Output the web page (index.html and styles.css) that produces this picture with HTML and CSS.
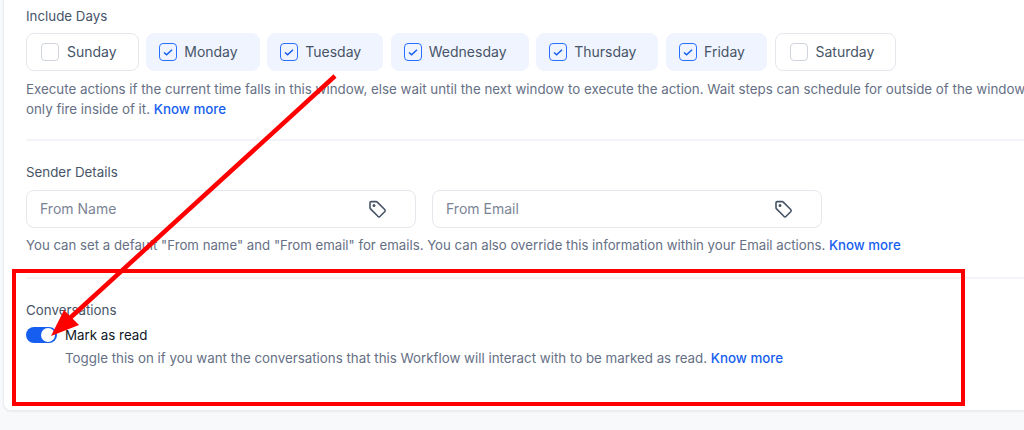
FILE: index.html
```html
<!DOCTYPE html>
<html lang="en">
<head>
<meta charset="utf-8">
<title>Workflow settings</title>
<link rel="stylesheet" href="styles.css">
</head>
<body>
<main class="card">
  <section class="section section-days">
    <div class="label">Include Days</div>
    <div class="days">
      <div class="day"><span class="box"></span>Sunday</div>
      <div class="day on"><span class="box"><svg viewBox="0 0 16 16"><path d="M4 8.5l2.6 2.3L12 5.8"/></svg></span>Monday</div>
      <div class="day on"><span class="box"><svg viewBox="0 0 16 16"><path d="M4 8.5l2.6 2.3L12 5.8"/></svg></span>Tuesday</div>
      <div class="day on"><span class="box"><svg viewBox="0 0 16 16"><path d="M4 8.5l2.6 2.3L12 5.8"/></svg></span>Wednesday</div>
      <div class="day on"><span class="box"><svg viewBox="0 0 16 16"><path d="M4 8.5l2.6 2.3L12 5.8"/></svg></span>Thursday</div>
      <div class="day on"><span class="box"><svg viewBox="0 0 16 16"><path d="M4 8.5l2.6 2.3L12 5.8"/></svg></span>Friday</div>
      <div class="day"><span class="box"></span>Saturday</div>
    </div>
    <p class="help help-wide">Execute actions if the current time falls in this window, else wait until the next window to execute the action. Wait steps can schedule for outside of the window,<br>only fire inside of it. <a href="#">Know more</a></p>
  </section>
  <section class="section section-sender">
    <div class="label">Sender Details</div>
    <div class="inputs">
      <div class="input"><span>From Name</span><svg class="tag" viewBox="0 0 20 20"><path d="M3.2 2.6h5a1.6 1.6 0 0 1 1.1.5l7.4 7.4a1.6 1.6 0 0 1 0 2.2l-4.6 4.6a1.6 1.6 0 0 1-2.2 0L2.5 9.9A1.6 1.6 0 0 1 2 8.8V3.8a1.2 1.2 0 0 1 1.2-1.2z"/><circle cx="6" cy="6.6" r=".7"/></svg></div>
      <div class="input"><span>From Email</span><svg class="tag" viewBox="0 0 20 20"><path d="M3.2 2.6h5a1.6 1.6 0 0 1 1.1.5l7.4 7.4a1.6 1.6 0 0 1 0 2.2l-4.6 4.6a1.6 1.6 0 0 1-2.2 0L2.5 9.9A1.6 1.6 0 0 1 2 8.8V3.8a1.2 1.2 0 0 1 1.2-1.2z"/><circle cx="6" cy="6.6" r=".7"/></svg></div>
    </div>
    <p class="help help-sender">You can set a default "From name" and "From email" for emails. You can also override this information within your Email actions. <a href="#">Know more</a></p>
  </section>
  <section class="section section-conv">
    <div class="label">Conversations</div>
    <div class="toggle-row">
      <span class="toggle"><span class="knob"></span></span>
      <span class="toggle-label">Mark as read</span>
    </div>
    <p class="help help-toggle">Toggle this on if you want the conversations that this Workflow will interact with to be marked as read. <a href="#">Know more</a></p>
  </section>
</main>
<svg class="annotation" viewBox="0 0 1024 430" aria-hidden="true">
  <rect x="14" y="271" width="949" height="133"/>
  <path class="shaft" d="M335 76L70 318"/>
  <path class="head" d="M51 336L64 310L79 325Z"/>
</svg>
</body>
</html>
```

FILE: styles.css
```css
* { box-sizing: border-box; }
html, body { margin: 0; height: 430px; overflow: hidden; }
body {
  position: relative;
  background: #f8f9fb;
  font-family: Inter, "Liberation Sans", sans-serif;
  font-size: 14px;
  line-height: 20px;
  color: #667085;
}
.card {
  width: 1100px;
  height: 411px;
  margin-left: 3px;
  background: #fff;
  border: 1px solid #eaecf0;
  border-top: 0;
  border-radius: 0 0 8px 8px;
  padding: 0 0 0 22px;
  box-shadow: 0 1px 2px rgba(16, 24, 40, .05);
}
.section { border-bottom: 2px solid #f2f4f7; }
.section-days { height: 141px; padding-top: 6px; }
.section-sender { height: 138px; padding-top: 21px; }
.section-conv { border-bottom: 0; padding-top: 21px; }
.label { font-size: 13.33px; line-height: 20px; color: #475467; font-weight: 400; }
.days { display: flex; gap: 7.6px; margin-top: 7px; }
.day {
  display: flex;
  align-items: center;
  gap: 8px;
  height: 38px;
  padding: 0 21px 0 14px;
  border: 1px solid #e4e7ec;
  border-radius: 8px;
  color: #475467;
  background: #fff;
  white-space: nowrap;
}
.day.on { gap: 7px; padding: 0 21px 0 12px; background: #eff4ff; border-color: #eff4ff; }
.box {
  width: 18px;
  height: 18px;
  flex: none;
  border: 1px solid #d0d5dd;
  border-radius: 4px;
  background: #fff;
}
.on .box { border-color: #2970ff; background: #eff4ff; }
.box svg { display: block; width: 16px; height: 16px; fill: none; stroke: #155eef; stroke-width: 1.5; }
.help { margin: 8px 0 0; font-size: 13.33px; line-height: 19px; color: #667085; }
.help-wide { white-space: nowrap; line-height: 20px; }
.help-sender { font-size: 13.23px; }
.help a { color: #155eef; text-decoration: none; font-weight: 500; }
.inputs { display: flex; gap: 16px; margin-top: 8px; }
.input {
  display: flex;
  align-items: center;
  justify-content: space-between;
  width: 390px;
  height: 38px;
  padding: 0 27px 0 13px;
  border: 1px solid #e4e7ec;
  border-radius: 8px;
  color: #7b8494;
}
.tag { width: 20px; height: 20px; fill: none; stroke: #475467; stroke-width: 1.6; }
.toggle-row { display: flex; align-items: center; gap: 8px; margin-top: 5px; }
.toggle {
  display: flex;
  justify-content: flex-end;
  align-items: center;
  width: 31px;
  height: 16px;
  padding: 0 2px;
  border-radius: 8px;
  background: #155eef;
}
.knob { width: 14px; height: 14px; border-radius: 50%; background: #fff; }
.toggle-label { font-size: 13.33px; font-weight: 400; color: #101828; }
.help-toggle { margin: 4px 0 0 39px; }
.annotation { position: absolute; inset: 0; width: 1024px; height: 430px; pointer-events: none; }
.annotation rect { fill: none; stroke: #f00; stroke-width: 4; }
.annotation .shaft { fill: none; stroke: #f00; stroke-width: 4.5; }
.annotation .head { fill: #f00; }
```
